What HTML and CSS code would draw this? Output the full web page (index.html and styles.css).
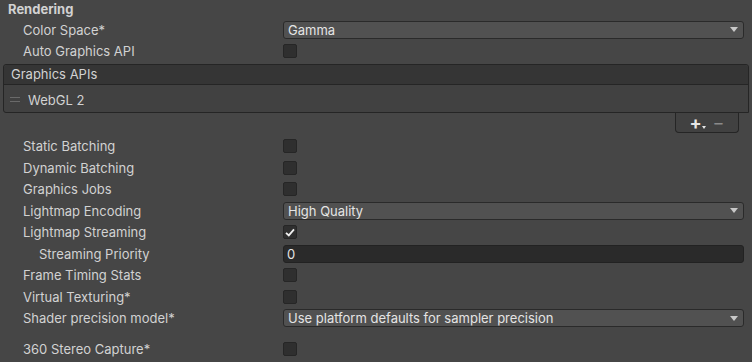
FILE: index.html
```html
<!DOCTYPE html>
<html lang="en">
<head>
    <meta charset="UTF-8">
    <title>Rendering</title>
    <link rel="stylesheet" href="styles.css">
</head>
<body>
    <div class="inspector">
        <div class="section-title">Rendering</div>

        <div class="row">
            <span class="label">Color Space*</span>
            <div class="dropdown"><span>Gamma</span><span class="arrow"></span></div>
        </div>
        <div class="row">
            <span class="label">Auto Graphics API</span>
            <span class="check"></span>
        </div>

        <div class="list">
            <div class="list-header">Graphics APIs</div>
            <div class="list-body">
                <span class="handle"></span>
                <span>WebGL 2</span>
            </div>
        </div>
        <div class="list-footer">
            <div class="footer-buttons">
                <span class="btn plus">+<span class="mini-arrow"></span></span>
                <span class="btn minus">&minus;</span>
            </div>
        </div>

        <div class="row">
            <span class="label">Static Batching</span>
            <span class="check"></span>
        </div>
        <div class="row">
            <span class="label">Dynamic Batching</span>
            <span class="check"></span>
        </div>
        <div class="row">
            <span class="label">Graphics Jobs</span>
            <span class="check"></span>
        </div>
        <div class="row">
            <span class="label">Lightmap Encoding</span>
            <div class="dropdown"><span>High Quality</span><span class="arrow"></span></div>
        </div>
        <div class="row">
            <span class="label">Lightmap Streaming</span>
            <span class="check checked">
                <svg width="10" height="9" viewBox="0 0 10 9"><path d="M1 4.8 L3.8 7.4 L9 1.4" fill="none" stroke="#f0f0f0" stroke-width="1.8"/></svg>
            </span>
        </div>
        <div class="row">
            <span class="label sub">Streaming Priority</span>
            <div class="textfield">0</div>
        </div>
        <div class="row">
            <span class="label">Frame Timing Stats</span>
            <span class="check"></span>
        </div>
        <div class="row">
            <span class="label">Virtual Texturing*</span>
            <span class="check"></span>
        </div>
        <div class="row">
            <span class="label">Shader precision model*</span>
            <div class="dropdown"><span>Use platform defaults for sampler precision</span><span class="arrow"></span></div>
        </div>
        <div class="row spaced">
            <span class="label">360 Stereo Capture*</span>
            <span class="check"></span>
        </div>
    </div>
</body>
</html>
```

FILE: styles.css
```css
body {
    margin: 0;
    background: #464646;
    color: #d2d2d2;
    font-family: Inter, "Noto Sans", sans-serif;
    font-size: 13px;
    overflow: hidden;
}

.inspector {
    width: 752px;
}

.section-title {
    height: 19px;
    line-height: 19px;
    padding-left: 8px;
    font-weight: bold;
}

.row {
    height: 21.5px;
    display: flex;
    align-items: center;
    padding-right: 8px;
}

.row.spaced {
    margin-top: 9.5px;
}

.label {
    width: 260px;
    padding-left: 23px;
    flex-shrink: 0;
}

.label.sub {
    width: 244px;
    padding-left: 39px;
}

.dropdown {
    flex: 1;
    height: 18px;
    box-sizing: border-box;
    background: #515151;
    border: 1px solid #2a2a2a;
    border-radius: 3px;
    display: flex;
    align-items: center;
    justify-content: space-between;
    padding: 0 5px 0 4px;
    color: #e4e4e4;
}

.arrow {
    width: 0;
    height: 0;
    border-left: 4px solid transparent;
    border-right: 4px solid transparent;
    border-top: 5px solid #c8c8c8;
}

.check {
    width: 14px;
    height: 14px;
    box-sizing: border-box;
    background: #2f2f2f;
    border: 1px solid #262626;
    border-radius: 2px;
    display: flex;
    align-items: center;
    justify-content: center;
}

.textfield {
    flex: 1;
    height: 18px;
    box-sizing: border-box;
    background: #2a2a2a;
    border: 1px solid #222;
    border-radius: 3px;
    padding-left: 3px;
    line-height: 16px;
    color: #e4e4e4;
}

.list {
    margin: 2px 3px 0 3px;
    border: 1px solid #252525;
    border-radius: 3px 3px 0 3px;
    background: #414141;
}

.list-header {
    height: 19px;
    line-height: 19px;
    padding-left: 7px;
    background: #353535;
    border-bottom: 1px solid #252525;
    border-radius: 3px 3px 0 0;
}

.list-body {
    height: 27px;
    display: flex;
    align-items: center;
    padding-top: 2px;
    box-sizing: border-box;
}

.handle {
    width: 10px;
    height: 3px;
    border-top: 1px solid #6a6a6a;
    border-bottom: 1px solid #6a6a6a;
    margin: 0 8px 0 6px;
}

.list-footer {
    display: flex;
    justify-content: flex-end;
    padding-right: 13px;
}

.footer-buttons {
    width: 64px;
    height: 20px;
    box-sizing: border-box;
    border: 1px solid #252525;
    border-top: none;
    border-radius: 0 0 4px 4px;
    background: #414141;
    display: flex;
    align-items: center;
    justify-content: space-around;
    padding: 0 8px 0 8px;
}

.btn {
    position: relative;
    font-size: 18px;
    line-height: 17px;
    font-weight: bold;
}

.plus {
    color: #e6e6e6;
}

.minus {
    color: #8a8a8a;
    font-weight: normal;
}

.mini-arrow {
    position: absolute;
    right: -4px;
    bottom: 2px;
    width: 0;
    height: 0;
    border-left: 2px solid transparent;
    border-right: 2px solid transparent;
    border-top: 3px solid #e6e6e6;
}

.list-footer + .row {
    margin-top: 2.5px;
}
```
